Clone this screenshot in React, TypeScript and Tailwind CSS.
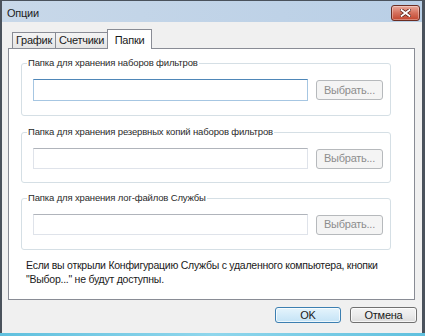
import React from 'react';

const groups = [
  { title: 'Папка для хранения наборов фильтров', focused: true, box: 'mt-[14px] h-[53px]' },
  { title: 'Папка для хранения резервных копий наборов фильтров', focused: false, box: 'mt-[16px] h-[51px]' },
  { title: 'Папка для хранения лог-файлов Службы', focused: false, box: 'mt-[15px] h-[52px]' },
];

function CloseButton() {
  return (
    <div className="w-[29px] h-[16px] mt-[4px] rounded-[3px] border border-[#6b2d22] bg-gradient-to-b from-[#e9a99b] via-[#d5705c] to-[#c2452d] flex items-center justify-center shadow-[inset_0_0_0_1px_rgba(255,255,255,0.35)]">
      <svg width="11" height="8" viewBox="0 0 11 8">
        <path d="M1.5 1 L9.5 7 M9.5 1 L1.5 7" stroke="#5a1f16" strokeWidth="3.4" strokeLinecap="square" />
        <path d="M1.5 1 L9.5 7 M9.5 1 L1.5 7" stroke="#ffffff" strokeWidth="1.8" strokeLinecap="square" />
      </svg>
    </div>
  );
}

function FolderGroup({ title, focused, box }: { title: string; focused: boolean; box: string }) {
  return (
    <div className={`relative ${box} ml-[12px] w-[370px] rounded-[3px] border border-[#d5dfe5]`}>
      <span className="absolute -top-[7px] left-[5px] bg-white px-[1px] leading-[12px] text-[9.5px] tracking-[-0.15px] text-[#2a2a2a]">
        {title}
      </span>
      <div className="flex items-center pl-[11px] pt-[15px] gap-[8px]">
        <div
          className={
            focused
              ? 'w-[275px] h-[22px] bg-white border border-[#a6c6e2] border-t-[#4f87b8]'
              : 'w-[275px] h-[21px] bg-white border border-[#dfe3ea] border-t-[#b0b4bb]'
          }
        />
        <div className="w-[67px] h-[20px] rounded-[3px] border border-[#b6b9bc] bg-[#f4f4f4] flex items-center justify-center text-[#8d8d8d]">
          Выбрать...
        </div>
      </div>
    </div>
  );
}

export default function App() {
  return (
    <div className="w-[425px] h-[336px] flex flex-col bg-[#f0f0f0] font-['Liberation_Sans',Arial,sans-serif] text-[11px] tracking-[-0.25px] text-black overflow-hidden">
      {/* title bar */}
      <div className="h-[22px] shrink-0 flex items-start justify-between border-t border-l-2 border-r-[3px] border-[#4a525c] bg-gradient-to-r from-[#c8d8e9] to-[#b9cfe6] pl-[5px] pr-[2px]">
        <span className="mt-[4px] text-[#1e1e1e]">Опции</span>
        <CloseButton />
      </div>

      {/* client area */}
      <div className="flex-1 flex flex-col border-l-2 border-r-[3px] border-[#4a525c] pl-[6px] pr-[4px]">
        {/* tabs */}
        <div className="flex items-end h-[26px] pl-[4px]">
          <div className="w-[44px] h-[16px] border border-b-0 border-[#898c95] bg-gradient-to-b from-[#f4f4f4] to-[#e5e5e5] flex items-center justify-center text-[#1a1a1a]">
            График
          </div>
          <div className="w-[53px] h-[16px] -ml-px border border-b-0 border-[#898c95] bg-gradient-to-b from-[#f4f4f4] to-[#e5e5e5] flex items-center justify-center text-[#1a1a1a]">
            Счетчики
          </div>
          <div className="relative z-10 w-[45px] h-[20px] -ml-px -mb-px border border-b-0 border-[#898c95] bg-white flex items-start pt-[2px] justify-center text-[#1a1a1a]">
            Папки
          </div>
        </div>

        {/* panel */}
        <div className="w-[407px] h-[252px] border border-[#898c95] bg-white flex flex-col">
          {groups.map((g) => (
            <FolderGroup key={g.title} title={g.title} focused={g.focused} box={g.box} />
          ))}
          <p className="mt-[8px] ml-[17px] leading-[14px] text-[10.5px] text-[#1a1a1a]">
            Если вы открыли Конфигурацию Службы с удаленного компьютера, кнопки
            <br />
            "Выбор..." не будут доступны.
          </p>
        </div>

        {/* buttons */}
        <div className="flex justify-end gap-[9px] mt-[7px] pr-[1px]">
          <div className="w-[66px] h-[16px] rounded-[3px] border border-[#3c7fb1] bg-gradient-to-b from-[#e5f4fc] to-[#c4e3f6] shadow-[inset_0_0_0_1px_rgba(255,255,255,0.7)] flex items-center justify-center text-[#1a1a1a]">
            OK
          </div>
          <div className="w-[67px] h-[16px] rounded-[3px] border border-[#707070] bg-gradient-to-b from-[#f3f3f3] via-[#ebebeb] to-[#dcdcdc] shadow-[inset_0_0_0_1px_rgba(255,255,255,0.7)] flex items-center justify-center text-[#1a1a1a]">
            Отмена
          </div>
        </div>
      </div>

      {/* bottom frame */}
      <div className="h-[3px] shrink-0 bg-gradient-to-r from-[#5fc0de] via-[#8fd6ec] to-[#5fc0de]" />
    </div>
  );
}
